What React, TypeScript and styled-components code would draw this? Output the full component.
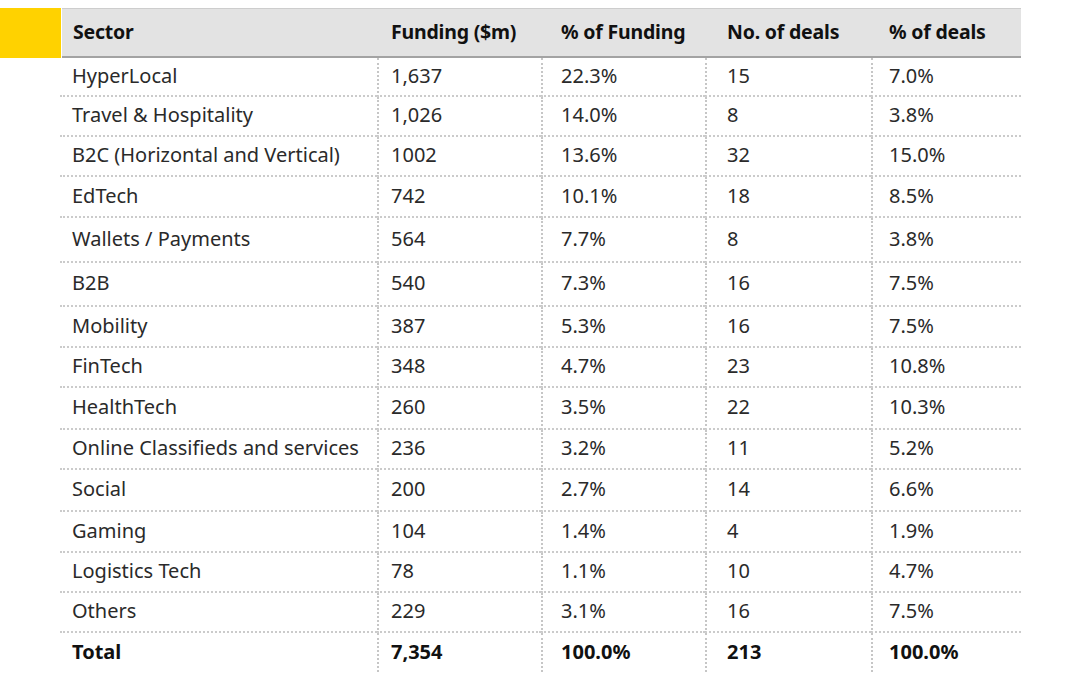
import React from "react";
import styled, { createGlobalStyle } from "styled-components";

const GlobalStyle = createGlobalStyle`
  html, body { margin: 0; padding: 0; background: #ffffff; }
  body { font-family: "Noto Sans", "DejaVu Sans", sans-serif; }
`;

const Page = styled.div`
  width: 1080px;
  height: 682px;
  display: flex;
  align-items: flex-start;
  padding-top: 8px;
  box-sizing: border-box;
  background: #fff;
  overflow: hidden;
`;

const Accent = styled.div`
  width: 61px;
  height: 50px;
  background: #ffd200;
  flex: none;
`;

const Table = styled.div`
  display: grid;
  grid-template-columns: 317px 164px 164px 166px 150px;
  width: 961px;
  margin-left: -1px;
`;

const HeaderCell = styled.div<{ $pad: number; $first: boolean }>`
  height: 47px;
  box-sizing: border-box;
  display: flex;
  align-items: center;
  padding-left: ${(p) => p.$pad}px;
  padding-bottom: 3px;
  background: #e3e3e3;
  border-top: 1px solid #cdcdcd;
  border-bottom: 2px solid #a3a3a3;
  font-weight: 700;
  font-size: 19.5px;
  letter-spacing: -0.2px;
  color: #111;
  margin-left: ${(p) => (p.$first ? 2 : 0)}px;
  height: 50px;
`;

const Cell = styled.div<{ $pad: number; $h: number; $first: boolean; $last: boolean; $bold: boolean }>`
  height: ${(p) => p.$h}px;
  box-sizing: border-box;
  display: flex;
  align-items: center;
  padding-left: ${(p) => p.$pad}px;
  padding-bottom: 3px;
  font-size: 20px;
  font-weight: ${(p) => (p.$bold ? 700 : 400)};
  color: ${(p) => (p.$bold ? "#111" : "#2a2a2a")};
  border-left: ${(p) => (p.$first ? "none" : "2px dotted #c6c6c6")};
  border-bottom: ${(p) => (p.$last ? "none" : "2px dotted #cbcbcb")};
  white-space: nowrap;
`;

const pads = [12, 12, 18, 20, 16];
const headers = ["Sector", "Funding ($m)", "% of Funding", "No. of deals", "% of deals"];

const rows: { cells: string[]; h: number }[] = [
  { cells: ["HyperLocal", "1,637", "22.3%", "15", "7.0%"], h: 39 },
  { cells: ["Travel & Hospitality", "1,026", "14.0%", "8", "3.8%"], h: 40 },
  { cells: ["B2C (Horizontal and Vertical)", "1002", "13.6%", "32", "15.0%"], h: 40 },
  { cells: ["EdTech", "742", "10.1%", "18", "8.5%"], h: 41 },
  { cells: ["Wallets / Payments", "564", "7.7%", "8", "3.8%"], h: 45 },
  { cells: ["B2B", "540", "7.3%", "16", "7.5%"], h: 44 },
  { cells: ["Mobility", "387", "5.3%", "16", "7.5%"], h: 41 },
  { cells: ["FinTech", "348", "4.7%", "23", "10.8%"], h: 40 },
  { cells: ["HealthTech", "260", "3.5%", "22", "10.3%"], h: 42 },
  { cells: ["Online Classifieds and services", "236", "3.2%", "11", "5.2%"], h: 40 },
  { cells: ["Social", "200", "2.7%", "14", "6.6%"], h: 42 },
  { cells: ["Gaming", "104", "1.4%", "4", "1.9%"], h: 41 },
  { cells: ["Logistics Tech", "78", "1.1%", "10", "4.7%"], h: 40 },
  { cells: ["Others", "229", "3.1%", "16", "7.5%"], h: 40 },
  { cells: ["Total", "7,354", "100.0%", "213", "100.0%"], h: 39 },
];

export default function App() {
  return (
    <>
      <GlobalStyle />
      <Page>
        <Accent />
        <Table>
          {headers.map((h, i) => (
            <HeaderCell key={h} $first={i === 0} $pad={i === 0 ? 11 : pads[i] + 2}>
              {h}
            </HeaderCell>
          ))}
          {rows.map((r, ri) =>
            r.cells.map((c, ci) => (
              <Cell
                key={ri + "-" + ci}
                $pad={pads[ci]}
                $h={r.h}
                $first={ci === 0}
                $last={ri === rows.length - 1}
                $bold={ri === rows.length - 1}
              >
                {c}
              </Cell>
            ))
          )}
        </Table>
      </Page>
    </>
  );
}
